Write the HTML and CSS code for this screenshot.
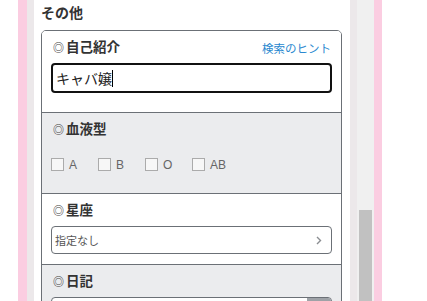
FILE: index.html
```html
<!DOCTYPE html>
<html lang="ja">
  <head>
    <meta charset="UTF-8" />
    <meta name="viewport" content="width=device-width, initial-scale=1.0" />
    <title>検索条件 - その他</title>
    <link rel="stylesheet" href="styles.css">
  </head>
  <body>
    <div class="frame">
      <div class="page">
        <h2 class="heading">その他</h2>
        <div class="card">
          <!-- 自己紹介 -->
          <div class="field field-intro">
            <div class="field-head">
              <span class="label"><span class="mark">◎</span>自己紹介</span>
              <a class="hint" href="#">検索のヒント</a>
            </div>
            <div class="text-input">キャバ嬢<span class="caret"></span></div>
          </div>

          <!-- 血液型 -->
          <div class="field field-gray field-blood">
            <div class="field-head">
              <span class="label"><span class="mark">◎</span>血液型</span>
            </div>
            <div class="checks">
              <label class="check"><span class="box"></span>A</label>
              <label class="check"><span class="box"></span>B</label>
              <label class="check"><span class="box"></span>O</label>
              <label class="check"><span class="box"></span>AB</label>
            </div>
          </div>

          <!-- 星座 -->
          <div class="field field-star">
            <div class="field-head">
              <span class="label"><span class="mark">◎</span>星座</span>
            </div>
            <div class="select">
              <span>指定なし</span>
              <svg class="chevron" width="6" height="9" viewBox="0 0 6 9">
                <path d="M1 1 L4.5 4.5 L1 8" fill="none" stroke="#8a8d91" stroke-width="1.4" />
              </svg>
            </div>
          </div>

          <!-- 日記 -->
          <div class="field field-gray">
            <div class="field-head">
              <span class="label"><span class="mark">◎</span>日記</span>
            </div>
            <div class="select diary">
              <span></span>
              <span class="diary-btn"></span>
            </div>
          </div>
        </div>
      </div>
      <div class="scrollbar"><div class="thumb"></div></div>
    </div>
  </body>
</html>
```

FILE: styles.css
```css
html,
body {
  margin: 0;
  padding: 0;
  background: #fff;
  height: 301px;
  overflow: hidden;
  font-family: "Liberation Sans", "Noto Sans CJK JP", sans-serif;
  color: #333;
}
.frame {
  display: flex;
  margin-left: 18px;
  width: 364px;
  height: 400px;
  box-sizing: border-box;
  border-left: 9px solid #fbcde1;
  border-right: 8px solid #fbcde1;
  background: #ece8ea;
}
.page {
  width: 316px;
  margin-left: 7px;
  margin-right: 7px;
  padding: 4px 8px 0 7px;
  box-sizing: border-box;
  background: #fff;
}
.heading {
  margin: 0 0 8px;
  font-size: 14px;
  line-height: 18px;
  font-weight: bold;
  color: #333;
}
.card {
  border: 1px solid #6b7076;
  border-radius: 5px;
  overflow: hidden;
}
.field {
  padding: 8px 9px 10px;
  background: #fff;
}
.field + .field {
  border-top: 1px solid #6b7076;
}
.field-gray {
  background: #ebecee;
}
.field-intro {
  padding-bottom: 19px;
}
.field-blood {
  padding-bottom: 22px;
}
.field-head {
  display: flex;
  justify-content: space-between;
  align-items: center;
  height: 18px;
  margin-bottom: 6px;
}
.label {
  padding-left: 2px;
  font-size: 13.5px;
  line-height: 18px;
  font-weight: bold;
  color: #333;
}
.mark {
  font-size: 11px;
  font-weight: bold;
  margin-right: 2px;
  color: #444;
}
.hint {
  font-size: 11.5px;
  color: #2a88cf;
  text-decoration: none;
  margin-right: 1px;
}
.text-input {
  display: flex;
  align-items: center;
  height: 30px;
  box-sizing: border-box;
  border: 2px solid #111;
  border-radius: 4px;
  padding-left: 3px;
  font-size: 14px;
  color: #222;
}
.caret {
  display: inline-block;
  width: 1px;
  height: 17px;
  background: #000;
}
.checks {
  display: flex;
  margin-top: 19px;
}
.check {
  display: flex;
  align-items: center;
  width: 47px;
  height: 13px;
  font-size: 12px;
  color: #666;
}
.box {
  width: 13px;
  height: 13px;
  box-sizing: border-box;
  border: 1px solid #ababab;
  background: #f7f7f7;
  margin-right: 5px;
}
.select {
  display: flex;
  justify-content: space-between;
  align-items: center;
  height: 28px;
  box-sizing: border-box;
  border: 1px solid #6b7076;
  border-radius: 4px;
  padding: 0 9px 0 3px;
  background: #fff;
  font-size: 11px;
  color: #555;
}
.diary {
  align-items: flex-start;
  padding-right: 0;
}
.diary-btn {
  width: 24px;
  height: 20px;
  background: #9ea2a7;
  border-top-right-radius: 3px;
}
.scrollbar {
  width: 17px;
  background: #f0f0f0;
}
.thumb {
  margin: 210px 0 0 2px;
  width: 13px;
  height: 150px;
  background: #c1c1c1;
}
```
